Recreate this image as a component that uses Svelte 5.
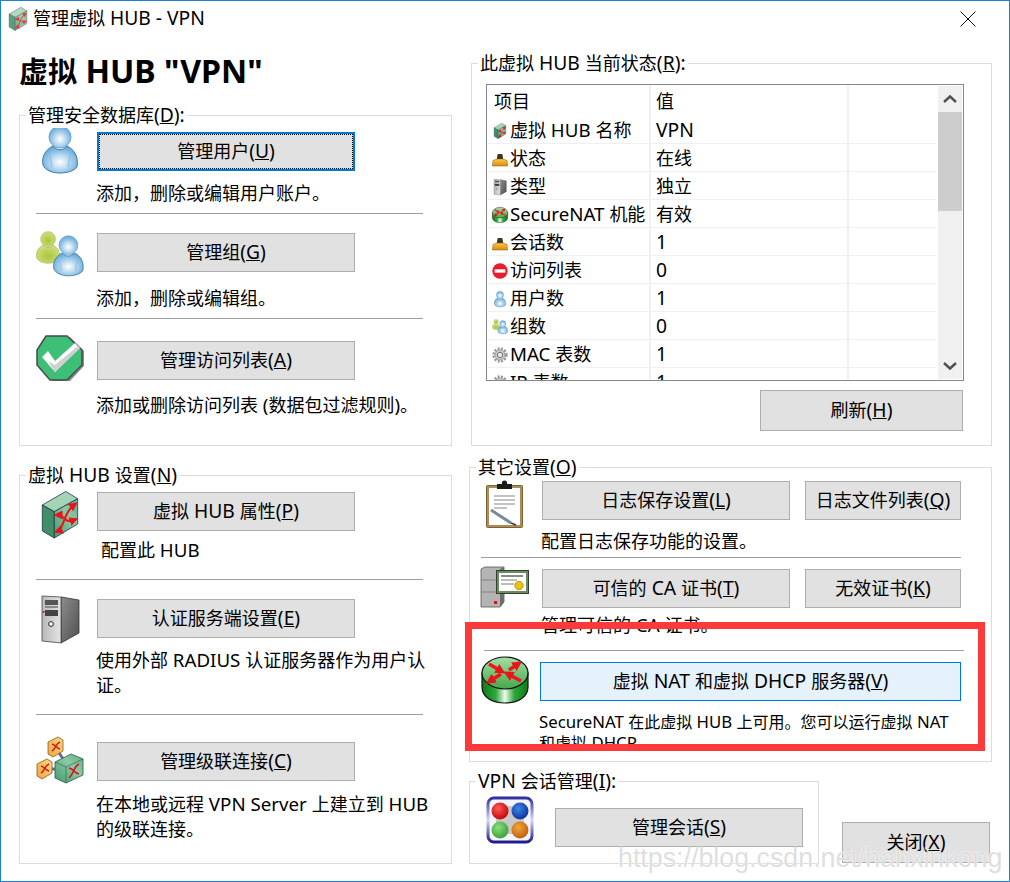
<script>
	const dbRows = [
		{ h: 97, icon: 'i-user', iconTop: 9, top: 16, gap: 10, left: 0, btns: [{ label: '管理用户', key: 'U', w: 258, focus: true }], desc: '添加，删除或编辑用户账户。' },
		{ h: 104, icon: 'i-group', iconTop: 17, top: 19, gap: 14, left: 0, btns: [{ label: '管理组', key: 'G', w: 258 }], desc: '添加，删除或编辑组。' },
		{ h: 126, icon: 'i-check', iconTop: 16, top: 22, gap: 13, left: 0, btns: [{ label: '管理访问列表', key: 'A', w: 258 }], desc: '添加或删除访问列表 (数据包过滤规则)。' }
	];

	const hubRows = [
		{ h: 103, icon: 'i-hub', iconTop: 15, top: 16, gap: 7, left: 5, btns: [{ label: '虚拟 HUB 属性', key: 'P', w: 258 }], desc: '配置此 HUB' },
		{ h: 134, icon: 'i-server', iconTop: 15, top: 19, gap: 10, left: 0, btns: [{ label: '认证服务端设置', key: 'E', w: 258 }], desc: '使用外部 RADIUS 认证服务器作为用户认\n证。' },
		{ h: 148, icon: 'i-cascade', iconTop: 22, top: 27, gap: 11, left: 0, btns: [{ label: '管理级联连接', key: 'C', w: 258 }], desc: '在本地或远程 VPN Server 上建立到 HUB\n的级联连接。' }
	];

	const statusRows = [
		{ icon: 'i-hub', name: '虚拟 HUB 名称', value: 'VPN' },
		{ icon: 'i-status', name: '状态', value: '在线' },
		{ icon: 'i-server', name: '类型', value: '独立' },
		{ icon: 'i-router', name: 'SecureNAT 机能', value: '有效' },
		{ icon: 'i-status', name: '会话数', value: '1' },
		{ icon: 'i-stop', name: '访问列表', value: '0' },
		{ icon: 'i-user', name: '用户数', value: '1' },
		{ icon: 'i-group', name: '组数', value: '0' },
		{ icon: 'i-gear', name: 'MAC 表数', value: '1' },
		{ icon: 'i-gear', name: 'IP 表数', value: '1' }
	];

	// latin runs sit a little larger than the cjk ones, like the original system font
	const runs = (s) => s.match(/[\x00-\x7f]+|[^\x00-\x7f]+/g) ?? [];
	const isLatin = (r) => r.charCodeAt(0) < 128;
</script>

{#snippet txt(s)}{#each runs(s) as r}{#if isLatin(r)}<span class="lat">{r}</span>{:else}{r}{/if}{/each}{/snippet}

{#snippet mnemonic(label, key, tail = '')}<span class="label">{@render txt(label)}<span class="lat">(<u>{key}</u>){tail}</span></span>{/snippet}

{#snippet button(b)}
	<button class="btn" class:focus={b.focus} class:hot={b.hot} style:width="{b.w}px">
		{@render mnemonic(b.label, b.key)}
	</button>
{/snippet}

{#snippet row(r)}
	<div class="row" style:height="{r.h}px">
		<svg class="icon" style:margin-top="{r.iconTop}px"><use href="#{r.icon}" /></svg>
		<div>
			<div class="btns" style:margin-top="{r.top}px">
				{#each r.btns as b}
					{@render button(b)}
				{/each}
			</div>
			<p class="desc" style:margin-top="{r.gap}px" style:margin-left="{r.left}px">{@render txt(r.desc)}</p>
		</div>
	</div>
{/snippet}

<svg class="defs" width="0" height="0" aria-hidden="true">
	<defs>
		<radialGradient id="blue" cx="50%" cy="60%" r="60%">
			<stop offset="0" stop-color="#ffffff" />
			<stop offset="0.45" stop-color="#b5d8f0" />
			<stop offset="1" stop-color="#5fa6d9" />
		</radialGradient>
		<radialGradient id="lime" cx="50%" cy="60%" r="60%">
			<stop offset="0" stop-color="#a9c63f" />
			<stop offset="1" stop-color="#d3e07a" />
		</radialGradient>
		<linearGradient id="hubface" x1="0" y1="1" x2="1" y2="0">
			<stop offset="0" stop-color="#3f9a6c" />
			<stop offset="0.6" stop-color="#8cc8a6" />
			<stop offset="1" stop-color="#5fae85" />
		</linearGradient>
		<linearGradient id="orangeface" x1="0" y1="1" x2="1" y2="0">
			<stop offset="0" stop-color="#eda53c" />
			<stop offset="1" stop-color="#fbd98a" />
		</linearGradient>
		<linearGradient id="rbody" x1="0" y1="0" x2="1" y2="0">
			<stop offset="0" stop-color="#0c7a18" />
			<stop offset="0.3" stop-color="#2fa83c" />
			<stop offset="0.5" stop-color="#eefcee" />
			<stop offset="0.7" stop-color="#2fa83c" />
			<stop offset="1" stop-color="#0c7a18" />
		</linearGradient>
		<linearGradient id="rtop" x1="0" y1="0" x2="0" y2="1">
			<stop offset="0" stop-color="#a5dea5" />
			<stop offset="1" stop-color="#45a84a" />
		</linearGradient>
		<linearGradient id="towerside" x1="0" y1="0" x2="1" y2="1">
			<stop offset="0" stop-color="#8d8d8d" />
			<stop offset="1" stop-color="#4f4f4f" />
		</linearGradient>
		<linearGradient id="towerfront" x1="0" y1="0" x2="1" y2="0">
			<stop offset="0" stop-color="#b9b9b9" />
			<stop offset="1" stop-color="#e4e4e4" />
		</linearGradient>
		<linearGradient id="orangebase" x1="0" y1="0" x2="0" y2="1">
			<stop offset="0" stop-color="#ffc94a" />
			<stop offset="1" stop-color="#d98a10" />
		</linearGradient>
		<linearGradient id="frame" x1="0" y1="0" x2="0" y2="1">
			<stop offset="0" stop-color="#3030a0" />
			<stop offset="0.5" stop-color="#d8d8f4" />
			<stop offset="1" stop-color="#1c1c8c" />
		</linearGradient>
		<radialGradient id="ballred" cx="40%" cy="35%" r="70%"><stop offset="0" stop-color="#ff5a5a" /><stop offset="1" stop-color="#c00000" /></radialGradient>
		<radialGradient id="ballblue" cx="40%" cy="35%" r="70%"><stop offset="0" stop-color="#3a86e8" /><stop offset="1" stop-color="#0a2f9a" /></radialGradient>
		<radialGradient id="ballgreen" cx="40%" cy="35%" r="70%"><stop offset="0" stop-color="#8ae07a" /><stop offset="1" stop-color="#3a9a3a" /></radialGradient>
		<radialGradient id="ballorange" cx="40%" cy="35%" r="70%"><stop offset="0" stop-color="#f2a53a" /><stop offset="1" stop-color="#b85c10" /></radialGradient>
		<marker id="ah" viewBox="0 0 6 6" refX="3" refY="3" markerWidth="3" markerHeight="3" orient="auto-start-reverse">
			<path d="M0 0L6 3L0 6Z" fill="#e8141c" />
		</marker>
		<marker id="ah2" viewBox="0 0 6 6" refX="3" refY="3" markerWidth="4.5" markerHeight="4.5" orient="auto-start-reverse">
			<path d="M0 0L6 3L0 6Z" fill="#e8141c" />
		</marker>

		<path id="p-body" d="M7 40C5 30 11 24 17 21C21 26 27 26 31 21C37 24 43 30 41 42C38 46 31 48 24 48C16 48 9 45 7 40Z" />
		<circle id="p-head" cx="24" cy="12" r="11" />
		<g id="x-arrows" fill="none" stroke="#e8141c" stroke-width="2">
			<path d="M22 40C28 38 27 22 38 14" marker-start="url(#ah2)" marker-end="url(#ah2)" />
			<path d="M22 24C29 24 28 33 38 29" marker-start="url(#ah2)" marker-end="url(#ah2)" />
		</g>
		<g id="r-arrows" fill="none" stroke="#f0141c" stroke-width="3.4">
			<path d="M28 14L37 8" marker-end="url(#ah)" />
			<path d="M20 18L9 25" marker-end="url(#ah)" />
			<path d="M8 8L20 15" marker-end="url(#ah)" />
			<path d="M40 25L27 18" marker-end="url(#ah)" />
		</g>
	</defs>

	<symbol id="i-user" viewBox="0 0 48 48" overflow="visible">
		<use href="#p-body" fill="url(#blue)" stroke="#3f7aa5" stroke-width="1" />
		<path d="M14 30L16 42M34 30L32 42" stroke="#8dbbdc" fill="none" />
		<use href="#p-head" fill="url(#blue)" stroke="#6fa6cc" stroke-width="1" />
	</symbol>

	<symbol id="i-group" viewBox="0 0 48 48" overflow="visible">
		<g transform="translate(-4 0) scale(.67)">
			<use href="#p-body" fill="url(#lime)" stroke="#a3b56b" stroke-width="1" />
			<use href="#p-head" fill="url(#lime)" stroke="#a3b56b" stroke-width="1" />
		</g>
		<g transform="translate(12 4) scale(.85)">
			<use href="#p-body" fill="url(#blue)" stroke="#3f7aa5" stroke-width="1" />
			<path d="M14 30L16 42M34 30L32 42" stroke="#8dbbdc" fill="none" />
			<use href="#p-head" fill="url(#blue)" stroke="#6fa6cc" stroke-width="1" />
		</g>
	</symbol>

	<symbol id="i-check" viewBox="0 0 48 48" overflow="visible">
		<polygon points="11,3 34,2 48,16 48,31 34,46 16,46" fill="#8a8a8a" />
		<polygon points="10,1 31,1 46,15 46,30 31,45 14,45 1,30 1,15" fill="#3dbf78" stroke="#4a4a4a" stroke-width="1.5" />
		<polygon points="6,22 12,16 19,26 39,8 44,13 19,37" fill="#ffffff" />
		<polygon points="12,26 19,37 44,13 42,11 19,30" fill="#cfcfcf" />
	</symbol>

	<symbol id="i-hub" viewBox="0 0 48 48" overflow="visible">
		<polygon points="29.7,0.5 41.7,7.7 18.3,20.7 6.3,14" fill="#a4d4b6" stroke="#234" stroke-width=".8" />
		<polygon points="6.3,14 18.3,20.7 18.3,47 6.3,40" fill="#3f9068" stroke="#234" stroke-width=".8" />
		<polygon points="18.3,20.7 41.7,7.7 41.7,33 18.3,47" fill="url(#hubface)" stroke="#234" stroke-width=".8" />
		<use href="#x-arrows" />
	</symbol>

	<symbol id="i-server" viewBox="0 0 48 48" overflow="visible">
		<polygon points="25,2 43,5 43,38 25,48" fill="url(#towerside)" stroke="#333" stroke-width=".8" />
		<polygon points="6,1 25,2 25,48 6,46" fill="url(#towerfront)" stroke="#444" stroke-width=".8" />
		<rect x="9" y="5" width="13" height="5" fill="#555" />
		<rect x="9" y="11" width="13" height="2" fill="#888" />
		<rect x="9" y="15" width="13" height="6" fill="#444" />
		<circle cx="15" cy="29" r="2.4" fill="#fff" stroke="#222" stroke-width="1" />
		<rect x="6.5" y="16" width="2" height="2" fill="#c33" />
	</symbol>

	<symbol id="i-cascade" viewBox="0 0 48 48" overflow="visible">
		<path d="M21 13L30 26M14 32H28" stroke="#6a6a9a" stroke-width="3" fill="none" />
		<g transform="translate(12 0)">
			<polygon points="0,5 10,0 15,3 15,14 5,20 0,17" fill="url(#orangeface)" stroke="#8a5a1a" stroke-width=".8" />
			<path d="M4 14C8 12 7 7 12 5M4 7C8 8 8 11 12 12" stroke="#d01818" stroke-width="1.4" fill="none" />
		</g>
		<g transform="translate(1 22)">
			<polygon points="0,5 10,0 15,3 15,14 5,20 0,17" fill="url(#orangeface)" stroke="#8a5a1a" stroke-width=".8" />
			<path d="M4 14C8 12 7 7 12 5M4 7C8 8 8 11 12 12" stroke="#d01818" stroke-width="1.4" fill="none" />
		</g>
		<g transform="translate(19 17)">
			<polygon points="0,8 16,0 28,5 28,21 11,29 0,24" fill="url(#hubface)" stroke="#2a5a44" stroke-width=".8" />
			<path d="M0 8L11 13V29M11 13L28 5" stroke="#2a5a44" stroke-width=".6" fill="none" />
			<path d="M14 24C19 20 18 13 24 10M14 14C19 15 19 19 24 20" stroke="#d01818" stroke-width="1.6" fill="none" />
		</g>
	</symbol>

	<symbol id="i-clip" viewBox="0 0 48 48" overflow="visible">
		<rect x="5.5" y="5.5" width="36" height="42" rx="1" fill="#ac8c58" stroke="#7c6234" />
		<polygon points="8,8 39,8 39,45 8,45" fill="#ffffff" />
		<path d="M13 16H34M13 20H34M13 24H34M13 28H26" stroke="#b0b0b0" stroke-width="1.6" />
		<path d="M10 30L30 43" stroke="#7b8a9a" stroke-width="3" />
		<path d="M30 43L35 45" stroke="#333" stroke-width="1.5" />
		<rect x="16" y="4" width="15" height="5" fill="#1c1c1c" />
		<circle cx="23.5" cy="3" r="2.6" fill="#1c1c1c" />
	</symbol>

	<symbol id="i-cert" viewBox="0 0 48 48" overflow="visible">
		<polygon points="0,3 4,1 23,1 23,36 19,41 0,41" fill="#b4b4b4" stroke="#555" stroke-width=".8" />
		<polygon points="19,3 23,1 23,36 19,41" fill="#6c6c6c" />
		<path d="M0 14H19M0 26H19" stroke="#7a7a7a" stroke-width=".8" fill="none" />
		<rect x="13" y="35" width="3" height="3" fill="#e01010" />
		<rect x="15.5" y="4.5" width="32" height="23" fill="#6f8a62" stroke="#2c4428" />
		<rect x="18" y="7" width="27" height="18" fill="#fff" />
		<path d="M20 10H42" stroke="#8a8a8a" stroke-width="2" />
		<path d="M20 14H36M20 18H33" stroke="#a8a8a8" stroke-width="1.4" />
		<circle cx="38" cy="19.5" r="4.2" fill="#f0c010" stroke="#a88a10" stroke-width=".8" />
	</symbol>

	<symbol id="i-router" viewBox="0 0 48 48" overflow="visible">
		<path d="M1 17V31C1 41 11 47 24 47S47 41 47 31V17Z" fill="url(#rbody)" stroke="#111" stroke-width="1.2" />
		<ellipse cx="24" cy="17" rx="23" ry="16" fill="url(#rtop)" stroke="#111" stroke-width="1.2" />
		<use href="#r-arrows" />
	</symbol>

	<symbol id="i-session" viewBox="0 0 48 48" overflow="visible">
		<rect x="2" y="2" width="44" height="44" rx="6" fill="#f4f4fa" stroke="url(#frame)" stroke-width="3" />
		<rect x="10" y="10" width="28" height="28" fill="#c8c8c8" />
		<circle cx="14" cy="15" r="8.5" fill="url(#ballred)" />
		<circle cx="34" cy="15" r="8.5" fill="url(#ballblue)" />
		<circle cx="14" cy="34" r="8.5" fill="url(#ballgreen)" />
		<circle cx="34" cy="34" r="8.5" fill="url(#ballorange)" />
	</symbol>

	<symbol id="i-status" viewBox="0 0 48 48" overflow="visible">
		<polygon points="14,26 17,9 31,9 34,26" fill="#3c3424" />
		<polygon points="3,28 16,24 32,24 45,28 47,45 1,45" fill="url(#orangebase)" stroke="#8a5a10" stroke-width="1.5" />
	</symbol>

	<symbol id="i-stop" viewBox="0 0 48 48" overflow="visible">
		<circle cx="24" cy="24" r="23" fill="#ea1c2c" />
		<rect x="8" y="19" width="32" height="10" fill="#fff" />
	</symbol>

	<symbol id="i-gear" viewBox="0 0 48 48" overflow="visible">
		<circle cx="24" cy="24" r="19" fill="none" stroke="#9a9a9a" stroke-width="8" stroke-dasharray="6 4" />
		<circle cx="24" cy="24" r="15" fill="#c8c8c8" stroke="#8a8a8a" stroke-width="2" />
		<circle cx="24" cy="24" r="8" fill="#e8e8e8" stroke="#777" stroke-width="3" />
	</symbol>
</svg>

<div class="window">
	<header class="titlebar">
		<svg class="title-icon"><use href="#i-hub" /></svg>
		<span class="label title">{@render txt('管理虚拟 HUB - VPN')}</span>
		<svg class="close" viewBox="0 0 16 16"><path d="M.5.5L15.5 15.5M15.5.5L.5 15.5" stroke="#111" fill="none" /></svg>
	</header>

	<main class="columns">
		<section class="col">
			<h1>{@render txt('虚拟 HUB "VPN"')}</h1>

			<div class="group db">
				<span class="legend">{@render mnemonic('管理安全数据库', 'D', ':')}</span>
				<div class="stack">
					{#each dbRows as r, i}
						{#if i}<hr />{/if}
						{@render row(r)}
					{/each}
				</div>
			</div>

			<div class="group hub">
				<span class="legend">{@render mnemonic('虚拟 HUB 设置', 'N')}</span>
				<div class="stack">
					{#each hubRows as r, i}
						{#if i}<hr />{/if}
						{@render row(r)}
					{/each}
				</div>
			</div>
		</section>

		<section class="col">
			<div class="group status">
				<span class="legend">{@render mnemonic('此虚拟 HUB 当前状态', 'R', ':')}</span>
				<div class="list">
					<div class="rows">
						<div class="tr head">
							<div class="td first">项目</div>
							<div class="td second">值</div>
							<div class="td"></div>
						</div>
						{#each statusRows as s}
							<div class="tr">
								<div class="td first">
									<svg class="mini"><use href="#{s.icon}" /></svg>
									<span class="label">{@render txt(s.name)}</span>
								</div>
								<div class="td second">{@render txt(s.value)}</div>
								<div class="td"></div>
							</div>
						{/each}
					</div>
					<div class="scrollbar">
						<div class="arrow">
							<svg width="16" height="10" viewBox="0 0 16 10"><path d="M2 8L8 2.5L14 8" fill="none" stroke="#505050" stroke-width="2.4" /></svg>
						</div>
						<div class="thumb"></div>
						<div class="arrow down">
							<svg width="16" height="10" viewBox="0 0 16 10"><path d="M2 2L8 7.5L14 2" fill="none" stroke="#505050" stroke-width="2.4" /></svg>
						</div>
					</div>
				</div>
				<button class="btn refresh">{@render mnemonic('刷新', 'H')}</button>
			</div>

			<div class="group other">
				<span class="legend">{@render mnemonic('其它设置', 'O')}</span>
				<div class="stack other-stack">
					{@render row({ h: 89, icon: 'i-clip', iconTop: 12, top: 13, gap: 9, left: 0, btns: [{ label: '日志保存设置', key: 'L', w: 248 }, { label: '日志文件列表', key: 'Q', w: 156 }], desc: '配置日志保存功能的设置。' })}
					<hr />
					{@render row({ h: 92, icon: 'i-cert', iconTop: 8, top: 11, gap: 5, left: 0, btns: [{ label: '可信的 CA 证书', key: 'T', w: 248 }, { label: '无效证书', key: 'K', w: 156 }], desc: '管理可信的 CA 证书。' })}
					<hr class="shifted" />
					<div class="row nat">
						<svg class="icon router"><use href="#i-router" /></svg>
						<div>
							<div class="btns nat-btns">
								{@render button({ label: '虚拟 NAT 和虚拟 DHCP 服务器', key: 'V', w: 421, hot: true })}
							</div>
							<p class="desc nat-desc">{@render txt('SecureNAT 在此虚拟 HUB 上可用。您可以运行虚拟 NAT\n和虚拟 DHCP')}</p>
						</div>
					</div>
				</div>
			</div>

			<div class="bottom">
				<div class="group vpn">
					<span class="legend">{@render mnemonic('VPN 会话管理', 'I', ':')}</span>
					<svg class="icon session"><use href="#i-session" /></svg>
					<button class="btn session-btn">{@render mnemonic('管理会话', 'S')}</button>
				</div>
				<button class="btn close-btn">{@render mnemonic('关闭', 'X')}</button>
			</div>
		</section>
	</main>

	<div class="redbox"></div>
	<div class="watermark">https://blog.csdn.net/hanxinkong</div>
</div>

<style>
	:global(body) {
		background: #fff;
	}

	.defs {
		position: absolute;
	}

	.window {
		position: relative;
		box-sizing: border-box;
		width: 1010px;
		height: 882px;
		overflow: hidden;
		background: #fff;
		border: 1px solid #1a82d6;
		color: #000;
		font-family: 'Noto Sans', 'Noto Sans CJK SC', sans-serif;
		font-size: 18px;
	}

	.lat {
		font-size: 1.07em;
		line-height: 0;
	}

	.desc .lat,
	.first .lat {
		font-size: 1.04em;
	}

	h1 .lat {
		font-size: 1.11em;
	}

	.label {
		white-space: pre;
	}

	.titlebar {
		display: flex;
		align-items: center;
		height: 35px;
		padding: 0 33px 0 5px;
		gap: 3px;
	}

	.title {
		padding-bottom: 3px;
	}

	.title-icon {
		width: 24px;
		height: 24px;
		opacity: 0.85;
	}

	.close {
		width: 16px;
		height: 16px;
		margin-left: auto;
	}

	.columns {
		display: grid;
		grid-template-columns: 433px 521px;
		column-gap: 19px;
		padding-left: 18px;
	}

	h1 {
		margin: 18px 0 25px 0;
		font-size: 29px;
		line-height: 36px;
		font-weight: 700;
		white-space: pre;
	}

	.group {
		position: relative;
		box-sizing: border-box;
		border: 1px solid #dcdcdc;
	}

	.legend {
		position: absolute;
		top: -13px;
		left: 6px;
		padding: 0 2px;
		background: #fff;
		line-height: 25px;
		white-space: nowrap;
	}

	.db {
		height: 331px;
	}

	.hub {
		height: 389px;
		margin-top: 29px;
	}

	.stack {
		padding-left: 16px;
		width: 387px;
	}

	.row {
		display: grid;
		grid-template-columns: 48px 1fr;
		column-gap: 12px;
	}

	hr {
		height: 1px;
		margin: 0;
		border: 0;
		background: #a0a0a0;
	}

	.icon {
		display: block;
		width: 48px;
		height: 48px;
		overflow: visible;
	}

	.btns {
		display: flex;
		gap: 15px;
		margin-left: 1px;
	}

	.btn {
		box-sizing: border-box;
		display: flex;
		align-items: center;
		justify-content: center;
		flex: none;
		height: 39px;
		padding: 0 0 3px;
		background: #e1e1e1;
		border: 1px solid #adadad;
		color: #000;
		font: inherit;
	}

	.btn.focus {
		border: 2px solid #0078d7;
		outline: 1px dotted #000;
		outline-offset: -3px;
	}

	.btn.hot {
		background: #e5f1fb;
		border-color: #0078d7;
	}

	.desc {
		margin: 0;
		line-height: 25px;
		white-space: pre;
	}

	.status {
		height: 383px;
		margin-top: 27px;
		padding: 20px 0 0 14px;
	}

	.list {
		box-sizing: border-box;
		display: flex;
		width: 478px;
		height: 297px;
		border: 1px solid #828790;
	}

	.rows {
		flex: none;
		width: 449px;
		height: 295px;
		overflow: hidden;
	}

	.tr {
		display: grid;
		grid-template-columns: 164px 198px 1fr;
		height: 28px;
		box-sizing: border-box;
		border-bottom: 1px solid #f0f0f0;
		line-height: 27px;
		white-space: nowrap;
	}

	.tr.head {
		height: 31px;
		border-bottom: 0;
		line-height: 31px;
	}

	.td {
		box-sizing: border-box;
		padding-top: 1px;
	}

	.first {
		display: flex;
		align-items: center;
		padding-left: 5px;
		border-right: 2px solid #f0f0f0;
	}

	.head .first {
		padding-left: 7px;
	}

	.second {
		padding-left: 5px;
		border-right: 2px solid #eef2f6;
	}

	.mini {
		flex: none;
		width: 16px;
		height: 16px;
		margin-right: 2px;
		overflow: visible;
	}

	.scrollbar {
		display: flex;
		flex-direction: column;
		width: 24px;
		height: 293px;
		margin: 1px 0 0 2px;
		background: #f0f0f0;
	}

	.arrow {
		display: flex;
		align-items: center;
		justify-content: center;
		height: 26px;
	}

	.arrow.down {
		margin-top: auto;
	}

	.thumb {
		height: 99px;
		background: #cdcdcd;
	}

	.refresh {
		width: 203px;
		height: 41px;
		margin: 9px 0 0 274px;
	}

	.other {
		height: 295px;
		margin: 21px 0 0 -2px;
		width: 523px;
	}

	.other-stack {
		width: 480px;
		padding-left: 11px;
	}

	.shifted {
		margin-left: 3px;
		margin-right: -3px;
	}

	.nat {
		height: 110px;
	}

	.router {
		margin-top: 5px;
	}

	.nat-btns {
		margin: 11px 0 0 -1px;
	}

	.nat-desc {
		height: 40px;
		margin: 11px 0 0 -2px;
		overflow: hidden;
		font-size: 16px;
		line-height: 21px;
	}

	.nat-desc .lat {
		font-size: 1.05em;
	}

	.bottom {
		display: flex;
		align-items: flex-start;
		margin: 19px 0 0 -2px;
	}

	.vpn {
		display: flex;
		align-items: flex-start;
		width: 350px;
		height: 83px;
		padding-left: 16px;
	}

	.session {
		margin-top: 14px;
	}

	.session-btn {
		width: 248px;
		margin: 26px 0 0 21px;
	}

	.close-btn {
		width: 148px;
		height: 41px;
		margin: 41px 0 0 23px;
	}

	.redbox {
		position: absolute;
		left: 464px;
		top: 621px;
		width: 506px;
		height: 115px;
		border: 7px solid #fd3a3a;
	}

	.watermark {
		position: absolute;
		left: 617px;
		top: 841px;
		font-family: 'Liberation Sans', sans-serif;
		font-size: 26.8px;
		line-height: 32px;
		white-space: nowrap;
		color: rgba(170, 170, 170, 0.4);
		text-shadow: 0 0 2px #fff, 0 0 1px #fff;
	}
</style>
